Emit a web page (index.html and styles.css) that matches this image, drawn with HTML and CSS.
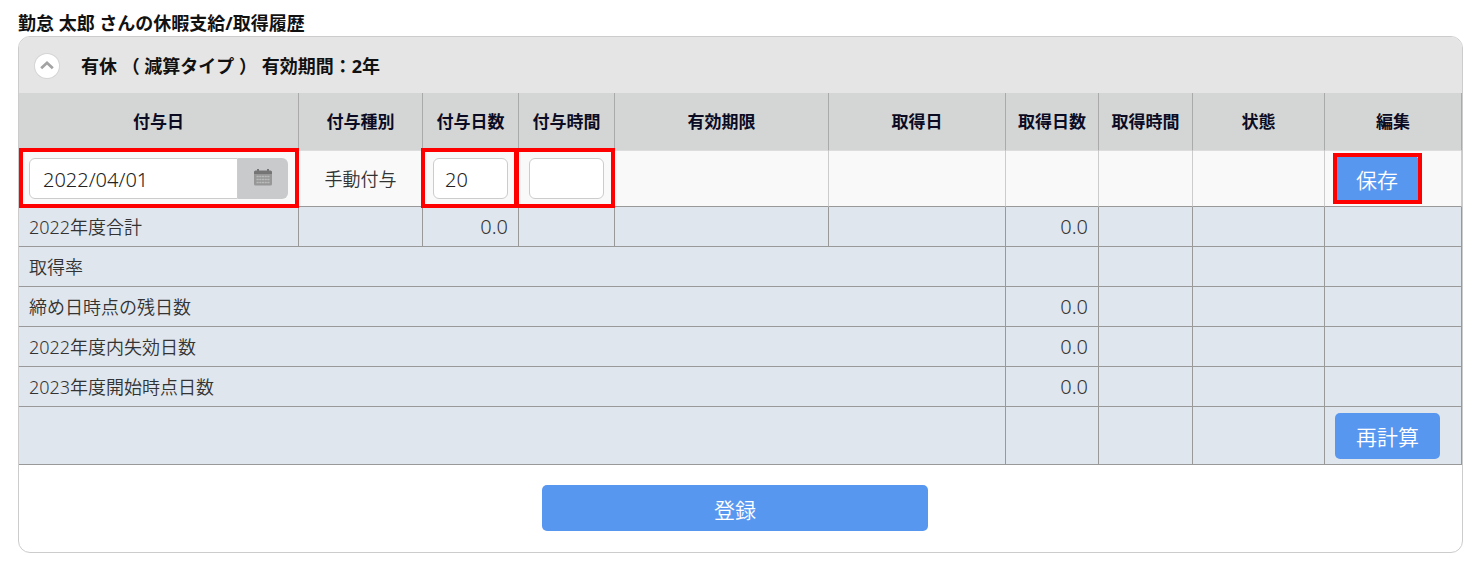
FILE: index.html
```html
<!DOCTYPE html>
<html lang="ja">
<head>
  <meta charset="UTF-8">
  <title>休暇支給/取得履歴</title>
  <link rel="stylesheet" href="styles.css">
</head>
<body>
  <h1>勤怠 太郎 さんの休暇支給/取得履歴</h1>

  <form class="panel">
    <div class="panel-head">
      <button type="button" class="toggle" aria-label="折りたたむ">
        <svg width="24" height="24" viewBox="0 0 24 24"><path d="M6.2 14.200 12 8.800l5.800 5.400" fill="none" stroke="#a3a3a3" stroke-width="2.800"/></svg>
      </button>
      <h2>有休 （ 減算タイプ ） 有効期間：2年</h2>
    </div>

    <table>
      <colgroup>
        <col class="c-date"><col class="c-type"><col class="c-num"><col class="c-num"><col class="c-limit">
        <col class="c-taken"><col class="c-days"><col class="c-hours"><col class="c-state"><col class="c-edit">
      </colgroup>
      <thead>
        <tr>
          <th>付与日</th><th>付与種別</th><th>付与日数</th><th>付与時間</th><th>有効期限</th>
          <th>取得日</th><th>取得日数</th><th>取得時間</th><th>状態</th><th>編集</th>
        </tr>
      </thead>
      <tbody>
        <tr class="entry">
          <td class="marked">
            <div class="date-field">
              <input type="text" value="2022/04/01" aria-label="付与日">
              <button type="button" aria-label="カレンダー">
                <svg width="20" height="20" viewBox="0 0 20 20">
                  <path d="M1 4q0-1.500 1.500-1.500h15q1.500 0 1.500 1.500v2H1z" fill="#757575"/>
                  <path d="M4 1h2v3H4zM14 1h2v3h-2z" fill="#757575"/>
                  <path d="M1 6h18v10q0 1.500-1.500 1.500h-15Q1 17.500 1 16z" fill="#979797"/>
                  <path d="M3.500 8.500h13M3.500 11.500h13M3.500 14.500h13" stroke="#b9babb" stroke-width="1.500" stroke-dasharray="2.200 .5"/>
                </svg>
              </button>
            </div>
          </td>
          <td class="center">手動付与</td>
          <td class="marked marked-days"><input type="text" value="20" aria-label="付与日数"></td>
          <td class="marked marked-hours"><input type="text" aria-label="付与時間"></td>
          <td></td><td></td><td></td><td></td><td></td>
          <td><span class="save"><button type="button" class="btn">保存</button></span></td>
        </tr>
        <tr><td>2022年度合計</td><td></td><td class="num">0.0</td><td></td><td></td><td></td><td class="num">0.0</td><td></td><td></td><td></td></tr>
        <tr><td colspan="6">取得率</td><td></td><td></td><td></td><td></td></tr>
        <tr><td colspan="6">締め日時点の残日数</td><td class="num">0.0</td><td></td><td></td><td></td></tr>
        <tr><td colspan="6">2022年度内失効日数</td><td class="num">0.0</td><td></td><td></td><td></td></tr>
        <tr><td colspan="6">2023年度開始時点日数</td><td class="num">0.0</td><td></td><td></td><td></td></tr>
        <tr class="recalc"><td colspan="6"></td><td></td><td></td><td></td><td><button type="button" class="btn">再計算</button></td></tr>
      </tbody>
    </table>

    <div class="panel-foot">
      <button type="submit" class="btn submit">登録</button>
    </div>
  </form>
</body>
</html>
```
FILE: styles.css
```css
* { box-sizing: border-box; }
body { margin: 0; padding: 10px 17px 15px 18px; background: #fff; color: #333; font: 350 18px/26px "Noto Sans", "Noto Sans CJK JP", sans-serif; }
h1, h2 { margin: 0; color: #111; font-size: 18px; line-height: 26px; font-weight: 700; }
input, button { font: inherit; }

.panel { border: 1px solid #ccc; border-radius: 12px; overflow: hidden; }
.panel-head { display: flex; align-items: center; gap: 22px; height: 56px; padding: 2px 16px 0; background: #e5e5e5; }
.toggle { display: flex; width: 24px; height: 24px; padding: 0; border: 0; border-radius: 50%; background: #fff; box-shadow: 0 0 0 1px #d5d5d5; }

table { width: 100%; table-layout: fixed; border-collapse: separate; border-spacing: 0; }
.c-date { width: 280px; }
.c-type { width: 124px; }
.c-num { width: 96px; }
.c-limit { width: 214px; }
.c-taken { width: 177px; }
.c-days { width: 93px; }
.c-hours { width: 94px; }
.c-state { width: 132px; }
.c-edit { width: 137px; }

th { height: 58px; padding: 0; background: #d4d6d5; border-right: 1px solid #aaa; border-bottom: 1px solid #ddd; color: #0b0b24; font-size: 17px; }
td { height: 40px; padding: 0 10px; background: #dfe6ee; border-right: 1px solid #999; border-bottom: 1px solid #999; }
.num { font-size: 20px; text-align: right; }
.center { text-align: center; }

.entry td { height: 56px; background: #f9f9f9; border-right-color: #ccc; }
.entry input { display: block; width: 100%; height: 41px; padding: 2px 11px 0; border: 1px solid #ccc; border-radius: 6px; background: #fff; color: #222; font-size: 20px; }
.date-field { display: flex; }
.date-field input { flex: 1; min-width: 0; padding-left: 13px; border-radius: 6px 0 0 6px; }
.date-field button { display: flex; align-items: flex-start; justify-content: center; width: 50px; padding: 10px 0; border: 0; border-radius: 0 6px 6px 0; background: #c9cacc; }

/* red frames round the fields to fill in */
.marked, .save { position: relative; }
.marked::after, .save::after { content: ""; position: absolute; z-index: 1; inset: -3px -1px -2px 0; border: 4px solid #f00; pointer-events: none; }
.marked-days::after { left: -2px; }
.marked-hours::after { left: -5px; }
.save { display: inline-block; vertical-align: middle; }
.save::after { inset: -3px -3px -2px -2px; }

.btn { display: block; height: 46px; padding: 3px 21px 0; border: 0; border-radius: 5px; background: #5897f0; color: #fff; font-size: 21px; line-height: 30px; }
.recalc td { height: 58px; }
.panel-foot { display: flex; justify-content: center; padding: 20px 11px 21px 0; }
.submit { width: 27%; }
```
